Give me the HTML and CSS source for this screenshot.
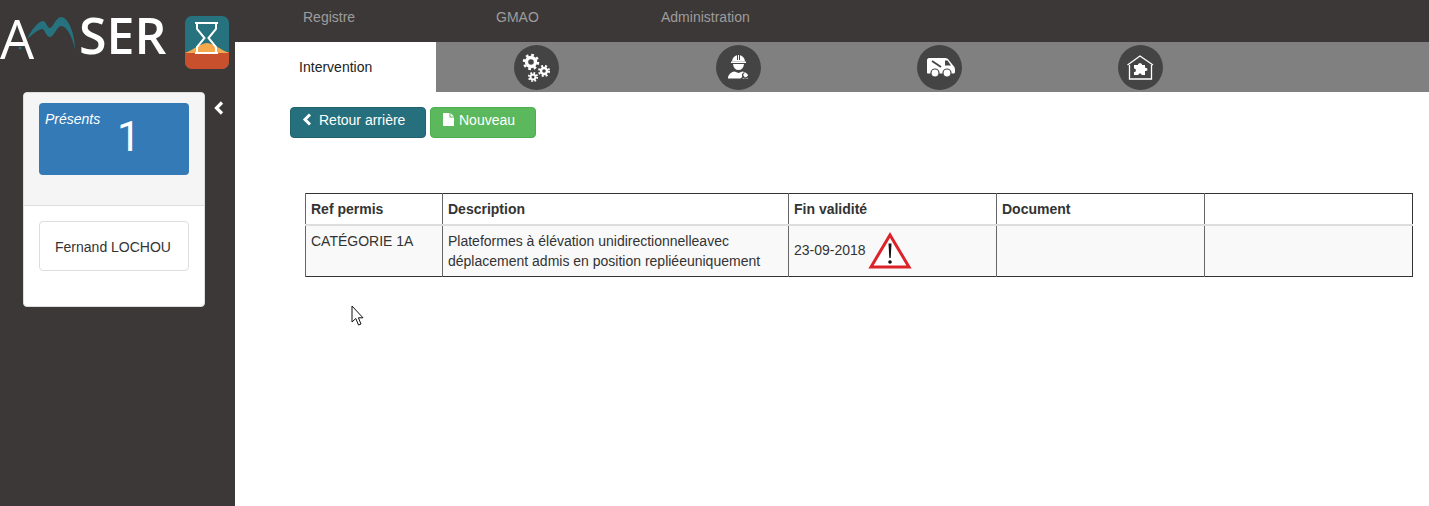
FILE: index.html
```html
<!DOCTYPE html>
<html lang="fr">
<head>
<meta charset="utf-8">
<title>AMSER</title>
<link rel="stylesheet" href="styles.css">
</head>
<body>
<div class="app">
  <aside class="side">
    <div class="brand">
      <div class="wordmark">
        <span class="w-a">A</span><span class="w-ser">SER</span>
        <svg class="w-arc" viewBox="0 0 50 40"><path d="M1 22C5 14 11 5 17 4C20 4 21 11 24 11C27 11 30 0 35 0C42 0 49 16 49 33C47 21 41 9 35 9C31 9 28 20 24 20C20 20 19 12 16 12C11 13 6 18 1 22Z" fill="#26737f"/><circle cx="-6" cy="31" r="1.500" fill="#26737f"/></svg>
      </div>
      <svg class="hourglass" viewBox="0 0 44 53">
        <rect width="44" height="53" rx="7" fill="#26737f"/>
        <path d="M0 36H44V46a7 7 0 0 1-7 7H7a7 7 0 0 1-7-7Z" fill="#c9502c"/>
        <path d="M0 37C10 33 14 28 22 27C30 28 34 33 44 37Z" fill="#f6a84c"/>
        <path d="M10 7H33M10 37H33M12 7V13L19.500 22L12 31V37M31 7V13L23.500 22L31 31V37" fill="none" stroke="#fff" stroke-width="2"/>
      </svg>
    </div>
    <div class="side-row">
      <div class="card">
        <div class="card-top">
          <div class="stat">
            <span class="stat-label">Présents</span>
            <span class="stat-num">1</span>
          </div>
        </div>
        <div class="card-body">
          <div class="person">Fernand LOCHOU</div>
        </div>
      </div>
      <svg class="collapse" viewBox="0 0 10 14"><path d="M8 1.500L2.500 7L8 12.500" fill="none" stroke="#fff" stroke-width="3.200"/></svg>
    </div>
  </aside>
  <main class="main">
    <nav class="topnav">
      <a class="nav-item nav-registre">Registre</a>
      <a class="nav-item nav-gmao">GMAO</a>
      <a class="nav-item">Administration</a>
    </nav>
    <div class="tabs">
      <div class="tab tab-active">Intervention</div>
      <div class="tab"><span class="disc">
        <svg viewBox="0 0 45 45"><g fill="none" stroke="#fff">
          <circle cx="17" cy="17" r="4.500" stroke-width="3.400"/><circle cx="17" cy="17" r="7" stroke-width="2.500" stroke-dasharray="2.700 2.800"/>
          <circle cx="30" cy="26" r="3" stroke-width="2.400"/><circle cx="30" cy="26" r="5" stroke-width="2" stroke-dasharray="2 2"/>
          <circle cx="19" cy="32" r="2.500" stroke-width="2"/><circle cx="19" cy="32" r="4.200" stroke-width="1.800" stroke-dasharray="1.700 1.600"/>
        </g></svg></span></div>
      <div class="tab"><span class="disc">
        <svg viewBox="0 0 45 45">
          <path d="M16 16.500a6.500 6.500 0 0 1 13 0Z" fill="#fff"/><path d="M15 16.500H30V18H15Z" fill="#fff"/>
          <path d="M17 19H28C27.500 23 25.500 25 22.500 25C19.500 25 17.500 23 17 19Z" fill="#fff"/>
          <path d="M12 33.500C12 29.500 15 27 18.500 26.500L22.500 28L26.500 26.500C29 27 31 28 32 30V33.500Z" fill="#fff"/>
          <path d="M21.500 10V15M23.500 10V15" stroke="#444" stroke-width="1"/>
          <path d="M25 34L28 31M28.500 27.500A2.800 2.800 0 1 0 32 31" fill="none" stroke="#444" stroke-width="1.300"/>
        </svg></span></div>
      <div class="tab"><span class="disc">
        <svg viewBox="0 0 45 45">
          <path d="M10 15C10 14 11 13 12 13H28C30 13 31.500 14 32.500 16L37 21.500C37.700 22.500 38 23.500 38 25V27C38 28 37 28.500 36 28.500H11C10 28.500 10 28 10 27Z" fill="#fff"/>
          <circle cx="18" cy="28" r="4" fill="#fff" stroke="#444" stroke-width="1.200"/><circle cx="30" cy="28" r="4" fill="#fff" stroke="#444" stroke-width="1.200"/>
          <path d="M28 15.500H30.500L34 20.500H28Z" fill="#444"/><path d="M15 16L24 22" stroke="#444" stroke-width="1.800"/>
        </svg></span></div>
      <div class="tab"><span class="disc">
        <svg viewBox="0 0 45 45">
          <path d="M9.500 20L22 11L35 20" fill="none" stroke="#fff" stroke-width="1.300"/>
          <path d="M11.500 20V34H33.500V20" fill="none" stroke="#fff" stroke-width="1.300"/>
          <path d="M16 20H20C19.500 17.500 24.500 17.500 24 20H27V23C29.500 22 31 26.500 27 26V30H23.500C24 28 20 28 20.500 30H16V27C18.500 27.500 18.500 23 16 23.500Z" fill="#fff"/>
        </svg></span></div>
    </div>
    <div class="content">
      <div class="actions">
        <a class="btn btn-back"><svg class="btn-icon" viewBox="0 0 11 13"><path d="M8 1.500L3 6.500L8 11.500" fill="none" stroke="#fff" stroke-width="3"/></svg>Retour arrière</a>
        <a class="btn btn-new"><svg class="btn-icon" viewBox="0 0 11 13"><path d="M0 0H6.500V4.500H11V13H0ZM7.500 0L11 3.500H7.500Z" fill="#fff"/></svg>Nouveau</a>
      </div>
      <table class="grid">
        <colgroup><col class="c1"><col class="c2"><col class="c3"><col class="c4"><col class="c5"></colgroup>
        <thead>
          <tr><th>Ref permis</th><th>Description</th><th>Fin validité</th><th>Document</th><th></th></tr>
        </thead>
        <tbody>
          <tr>
            <td class="top">CATÉGORIE 1A</td>
            <td>Plateformes à élévation unidirectionnelleavec déplacement admis en position repliéeuniquement</td>
            <td><span class="date"><span class="date-text">23-09-2018</span><svg class="warn" viewBox="0 0 44 38"><path d="M22 3L41 35H3Z" fill="#fff" stroke="#dc2329" stroke-width="3"/><path d="M20.500 11.500H23.500L22.700 26H21.300Z" fill="#111"/><circle cx="22" cy="30" r="1.800" fill="#111"/></svg></span></td>
            <td></td>
            <td></td>
          </tr>
        </tbody>
      </table>
    </div>
  </main>
</div>
<svg class="cursor" viewBox="0 0 13 22"><path d="M1 1V17L4.800 13.500L7.500 20L10 19L7.400 12.800H12Z" fill="#fff" stroke="#111" stroke-width="1"/></svg>
</body>
</html>
```
FILE: styles.css
```css
* { box-sizing: border-box; }
html, body { margin: 0; height: 100%; overflow: hidden; }
body { font-family: "Liberation Sans", Arial, sans-serif; font-size: 14px; color: #333; background: #fff; position: relative; }
.app { display: flex; height: 506px; }

.side { width: 235px; flex: none; background: #3c3837; }
.brand { height: 92px; display: flex; align-items: flex-start; padding-top: 16px; }
.wordmark { position: relative; width: 185px; height: 50px; margin-top: -4px; color: #fff; font-family: "Open Sans", sans-serif; font-weight: 600; font-size: 50px; line-height: 46px; display: flex; }
.w-a { width: 79px; font-weight: 500; font-size: 54px; line-height: 52px; }
.w-arc { position: absolute; left: 26px; top: 5px; width: 50px; height: 40px; overflow: visible; }
.hourglass { width: 44px; height: 53px; flex: none; }

.side-row { display: flex; align-items: flex-start; padding-left: 23px; }
.card { width: 182px; height: 215px; background: #fff; border: 1px solid #ddd; border-radius: 4px; overflow: hidden; }
.card-top { height: 113px; background: #f5f5f5; border-bottom: 1px solid #ddd; padding: 10px 15px; }
.stat { position: relative; height: 72px; background: #337ab7; border-radius: 4px; color: #fff; }
.stat-label { position: absolute; left: 6px; top: 8px; font-style: italic; }
.stat-num { position: absolute; left: 78px; top: 10px; font-family: Roboto, sans-serif; font-weight: 400; font-size: 42px; line-height: 48px; }
.card-body { padding: 15px; }
.person { height: 50px; border: 1px solid #ddd; border-radius: 4px; display: flex; align-items: center; justify-content: center; padding: 2px 2px 0 0; }
.collapse { width: 10px; height: 14px; margin: 9px 0 0 9px; }

.main { flex: 1; min-width: 0; }
.topnav { height: 42px; background: #3c3837; display: flex; padding: 9px 0 0 68px; color: #9d9d9d; line-height: 17px; }
.nav-registre { width: 193px; }
.nav-gmao { width: 165px; }
.tabs { height: 50px; background: #808080; display: flex; }
.tab { width: 201.33px; display: flex; justify-content: center; padding-top: 3px; }
.tab-active { background: #fff; color: #222; padding-top: 17px; line-height: 17px; }
.disc { width: 45px; height: 45px; border-radius: 50%; background: #444; display: block; }
.disc svg { width: 45px; height: 45px; display: block; }

.content { padding: 15px 16px 0 55px; }
.actions { display: flex; gap: 4px; }
.btn { height: 31px; border-radius: 4px; color: #fff; display: flex; align-items: center; gap: 5px; padding: 0 12px 6px; line-height: 20px; }
.btn-back { width: 136px; padding-left: 11px; gap: 6px; background: #26707d; border: 1px solid #22626e; }
.btn-new { width: 106px; background: #5cb85c; border: 1px solid #4cae4c; }
.btn-icon { width: 11px; height: 13px; flex: none; }

.grid { margin: 55px 0 0 15px; width: 1108px; border-collapse: collapse; table-layout: fixed; border: 1px solid #333; }
.c1 { width: 137px; }
.c2 { width: 346px; }
.c3 { width: 208px; }
.c4 { width: 208px; }
.c5 { width: 208px; }
th { height: 31px; padding: 0 5px; text-align: left; font-weight: 700; color: #333; border-left: 1px solid #666; border-bottom: 2px solid #ddd; }
td { height: 50px; padding: 5px; background: #f9f9f9; line-height: 20px; vertical-align: middle; border-left: 1px solid #666; color: #333; }
td.top { vertical-align: top; }
.date { display: flex; align-items: center; gap: 2px; }
.date-text { margin-bottom: 2px; }
.warn { width: 44px; height: 38px; flex: none; }

.cursor { position: absolute; left: 351px; top: 305px; width: 13px; height: 22px; }
```
